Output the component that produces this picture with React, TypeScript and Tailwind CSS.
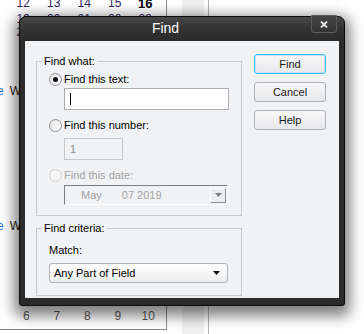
import React from "react";

function Radio({ checked, disabled }: { checked?: boolean; disabled?: boolean }) {
  return (
    <span
      className={
        "flex h-[13px] w-[13px] shrink-0 items-center justify-center rounded-full border " +
        (disabled
          ? "border-[#cdcfd2] bg-[#f4f4f4]"
          : "border-[#8d9095] bg-gradient-to-br from-[#e4e4e4] to-[#ffffff]")
      }
    >
      {checked && <span className="h-[5px] w-[5px] rounded-full bg-[#111]" />}
    </span>
  );
}

function WinButton({ label, focused }: { label: string; focused?: boolean }) {
  return (
    <div
      className={
        "flex h-[20px] w-[72px] items-center justify-center rounded-[3px] border bg-gradient-to-b from-[#f7f7f8] to-[#e7e8ea] text-[11px] text-[#1a1a1a] " +
        (focused ? "border-[#3db6ef] shadow-[inset_0_0_0_1px_#bfe6fa]" : "border-[#adb2b8]")
      }
    >
      {label}
    </div>
  );
}

function WeekRow({ cells, className }: { cells: React.ReactNode[]; className: string }) {
  return (
    <div className={"grid grid-cols-[repeat(5,30.5px)] text-center text-[12px] leading-[13px] " + className}>
      {cells.map((c, i) => (
        <span key={i}>{c}</span>
      ))}
    </div>
  );
}

export default function App() {
  return (
    <div className="relative flex h-[334px] w-[364px] overflow-hidden bg-white font-['Liberation_Sans',Arial,sans-serif]">
      {/* background calendar window (behind the dialog) */}
      <div className="flex h-[330px] w-[167px] shrink-0 flex-col border-b border-r border-[#8c8c8c]">
        <WeekRow
          className="-mt-[3px] pl-[8px] text-[#33265f]"
          cells={["12", "13", "14", "15", <b key="b" className="text-[13px] text-black">16</b>]}
        />
        <WeekRow className="mt-[2px] pl-[8px] text-[#33265f]" cells={["19", "20", "21", "22", "23"]} />
        <WeekRow className="pl-[8px] text-[#33265f]" cells={["26", "27", "28", "29", "30"]} />
        <div className="-ml-[3px] mt-[46px] flex gap-[6px] text-[12px] leading-[13px]">
          <span className="text-[#2f6fd0]">e</span>
          <span className="text-[#222]">W</span>
        </div>
        <div className="-ml-[3px] mt-[122px] flex gap-[6px] text-[12px] leading-[13px]">
          <span className="text-[#2f6fd0]">e</span>
          <span className="text-[#222]">W</span>
        </div>
        <WeekRow className="mt-auto mb-[6px] pl-[11px] text-[#5a5a5a]" cells={["6", "7", "8", "9", "10"]} />
      </div>
      <div className="ml-[15px] h-full w-[22px] bg-[#f0f0f0]" />
      <div className="ml-[4px] h-full w-px bg-[#b4b4b4]" />

      {/* dialog window */}
      <div className="absolute left-[19px] top-[16px] h-[290px] w-[326px] rounded-t-[7px] rounded-b-[3px] border border-[#0c0c0c] bg-[#2b2b2b] shadow-[0_5px_14px_5px_rgba(0,0,0,0.5)]">
        <div className="relative h-[24px] rounded-t-[6px] bg-gradient-to-b from-[#474747] via-[#323232] to-[#2b2b2b]">
          <div className="flex h-[24px] w-[291px] items-center justify-center pb-[1px] text-[14px] text-white">
            Find
          </div>
          <div className="absolute right-[7px] top-[-2px] flex h-[18px] w-[26px] items-center justify-center rounded-b-[3px] border border-[#5c5c5c] bg-gradient-to-b from-[#454545] to-[#333333]">
            <svg width="8" height="7" viewBox="0 0 8 7">
              <path d="M1 0.5 L7 6.5 M7 0.5 L1 6.5" stroke="#e6e6e6" strokeWidth="1.8" />
            </svg>
          </div>
        </div>

        <div className="mx-[5px] flex h-[257px] bg-[#f1f2f4] pl-[11px] pt-[13px] text-[11px] text-black">
          <div className="flex w-[206px] flex-col">
            <fieldset className="m-0 border border-[#c5c8cc] p-0">
              <legend className="ml-[5px] px-[2px] leading-[14px]">Find what:</legend>
              <div className="flex flex-col pb-[10px] pl-[12px]">
                <div className="mt-[4px] flex h-[14px] items-center gap-[2px] leading-[14px]">
                  <Radio checked />
                  <span>Find this text:</span>
                </div>
                <div className="ml-[15px] mt-[2px] flex h-[22px] w-[165px] items-center border border-[#abadb3] bg-white pl-[5px]">
                  <span className="h-[12px] w-px bg-black" />
                </div>
                <div className="mt-[8px] flex h-[14px] items-center gap-[2px] leading-[14px]">
                  <Radio />
                  <span>Find this number:</span>
                </div>
                <div className="ml-[15px] mt-[6px] flex h-[22px] w-[59px] items-center border border-[#c3c6ca] pl-[5px] text-[#8d8d8d]">
                  1
                </div>
                <div className="mt-[8px] flex h-[14px] items-center gap-[2px] leading-[14px] text-[#a3a3a3]">
                  <Radio disabled />
                  <span>Find this date:</span>
                </div>
                <div className="ml-[15px] mt-[3px] flex h-[20px] w-[164px] items-center border border-t-[#7b7f86] border-l-[#7b7f86] border-r-[#fdfdfd] border-b-[#fdfdfd] text-[#a0a0a0]">
                  <span className="ml-[16px]">May</span>
                  <span className="ml-[20px]">07 2019</span>
                  <div className="ml-auto mr-[1px] flex h-[15px] w-[16px] items-center justify-center border border-t-[#fdfdfd] border-l-[#fdfdfd] border-r-[#8a8d93] border-b-[#8a8d93] bg-[#eceef0]">
                    <svg width="7" height="4" viewBox="0 0 7 4">
                      <path d="M0 0 H7 L3.5 4 Z" fill="#7c7f84" />
                    </svg>
                  </div>
                </div>
              </div>
            </fieldset>

            <fieldset className="m-0 mt-[5px] border border-[#c5c8cc] p-0">
              <legend className="ml-[5px] px-[2px] leading-[14px]">Find criteria:</legend>
              <div className="flex flex-col pb-[12px] pl-[12px]">
                <div className="mt-[8px] h-[14px] leading-[14px]">Match:</div>
                <div className="mt-[6px] flex h-[20px] w-[179px] items-center rounded-[3px] border border-[#adb2b7] bg-gradient-to-b from-[#ffffff] to-[#ececed] pl-[4px] pr-[7px]">
                  <span>Any Part of Field</span>
                  <svg className="ml-auto" width="7" height="4" viewBox="0 0 7 4">
                    <path d="M0 0 H7 L3.5 4 Z" fill="#111" />
                  </svg>
                </div>
              </div>
            </fieldset>
          </div>

          <div className="ml-[12px] flex flex-col gap-[8px]">
            <WinButton label="Find" focused />
            <WinButton label="Cancel" />
            <WinButton label="Help" />
          </div>
        </div>
      </div>
    </div>
  );
}
